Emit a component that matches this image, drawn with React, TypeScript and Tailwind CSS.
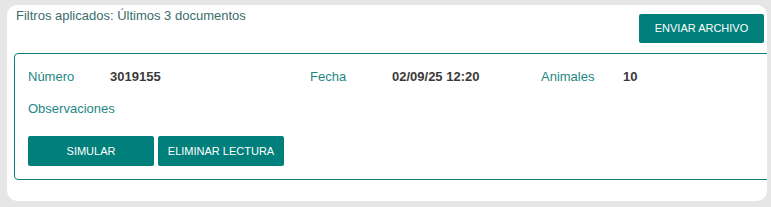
export default function App() {
  return (
    <div className="min-h-screen bg-[#e6e6e6] pt-[5px] pl-[7px] pr-[4px] font-['Liberation_Sans',Arial,sans-serif]">
      <div className="h-[196px] overflow-hidden rounded-[10px] bg-white pl-[7px] pr-[3px]">
        <div className="flex items-start justify-between pt-[3px]">
          <p className="ml-[2px] text-[13px] leading-[15px] text-[#3b6d6b]">Filtros aplicados: Últimos 3 documentos</p>
          <button className="mt-[6px] h-[29px] w-[125px] rounded-[2px] bg-[#007f7b] text-[11px] text-white">
            ENVIAR ARCHIVO
          </button>
        </div>

        <div className="-mr-[20px] mt-[10px] rounded-l-[4px] border border-[#0c807b] pl-[13px] pt-[15px] pb-[13px]">
          <div className="flex text-[13px] leading-[16px]">
            <span className="w-[82px] text-[#1d8784]">Número</span>
            <span className="w-[200px] font-bold text-[#3a3a3a]">3019155</span>
            <span className="w-[82px] text-[#1d8784]">Fecha</span>
            <span className="w-[149px] font-bold text-[#3a3a3a]">02/09/25 12:20</span>
            <span className="w-[82px] text-[#1d8784]">Animales</span>
            <span className="font-bold text-[#3a3a3a]">10</span>
          </div>
          <p className="mt-[16px] text-[13px] leading-[16px] text-[#1d8784]">Observaciones</p>
          <div className="mt-[19px] flex gap-[4px]">
            <button className="h-[30px] w-[126px] rounded-[2px] bg-[#007f7b] text-[11px] text-white">SIMULAR</button>
            <button className="h-[30px] w-[126px] rounded-[2px] bg-[#007f7b] text-[11px] text-white">ELIMINAR LECTURA</button>
          </div>
        </div>
      </div>
    </div>
  )
}
